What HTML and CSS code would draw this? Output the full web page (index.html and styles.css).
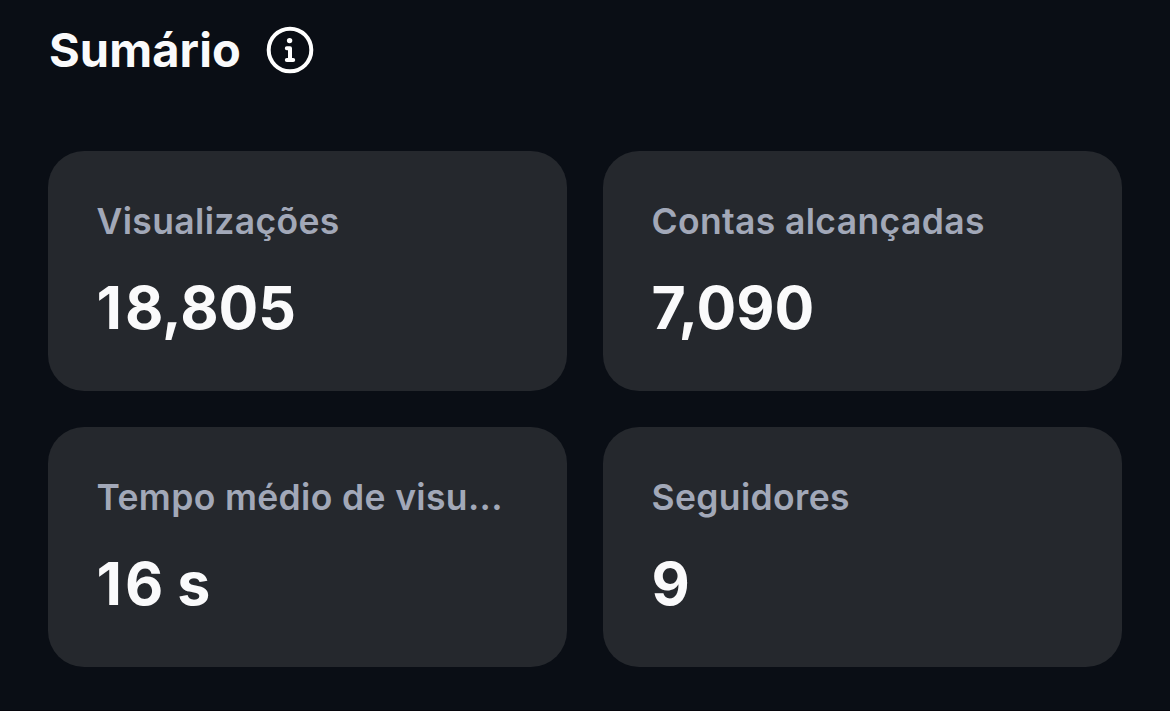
FILE: index.html
```html
<!DOCTYPE html>
<html lang="pt">
<head>
  <meta charset="UTF-8">
  <title>Sumário</title>
  <link rel="stylesheet" href="styles.css">
</head>
<body>
  <header class="titulo">
    <h1>Sumário</h1>
    <svg class="info" width="48" height="48" viewBox="0 0 48 48" fill="none">
      <circle cx="24" cy="24" r="21.3" stroke="#fff" stroke-width="4"/>
      <circle cx="23.6" cy="14.6" r="2.7" fill="#fff"/>
      <path d="M20.8 22.2H24V33.8M20.8 34H27.2" stroke="#fff" stroke-width="4" stroke-linecap="round" stroke-linejoin="round"/>
    </svg>
  </header>

  <main class="cards">
    <div class="card">
      <h2>Visualizações</h2>
      <p><span class="um">1</span>8,805</p>
    </div>
    <div class="card">
      <h2>Contas alcançadas</h2>
      <p>7,090</p>
    </div>
    <div class="card">
      <h2>Tempo médio de visu...</h2>
      <p><span class="um">1</span>6 s</p>
    </div>
    <div class="card">
      <h2>Seguidores</h2>
      <p>9</p>
    </div>
  </main>
</body>
</html>
```
FILE: styles.css
```css
* {
  box-sizing: border-box;
}
body {
  height: 711px;
  margin: 0;
  padding: 20px 48px 0;
  background: #0a0e15;
  border-bottom: 1px solid #06060c;
  color: #fafafb;
  font-family: Inter, sans-serif;
}
h1, h2, p {
  margin: 0;
}
.titulo {
  display: flex;
  align-items: center;
  gap: 25px;
  height: 60px;
  padding-left: 1px;
}
.titulo h1 {
  font-size: 47px;
  line-height: 60px;
  font-weight: 700;
  letter-spacing: 0.1px;
}
.cards {
  display: grid;
  grid-template-columns: 1fr 1fr;
  grid-auto-rows: 240px;
  gap: 36px;
  margin-top: 71px;
}
.card {
  padding: 48px 48.5px 0;
  background: #25282d;
  border-radius: 36px;
}
.card h2 {
  color: #a2a8b8;
  font-size: 35.5px;
  line-height: 46px;
  font-weight: 570;
  letter-spacing: 0.35px;
  white-space: nowrap;
}
.card p {
  margin-top: 27px;
  font-size: 59px;
  line-height: 72px;
  font-weight: 700;
}
/* espaço extra depois do 1 */
.um {
  letter-spacing: 3px;
}
```
